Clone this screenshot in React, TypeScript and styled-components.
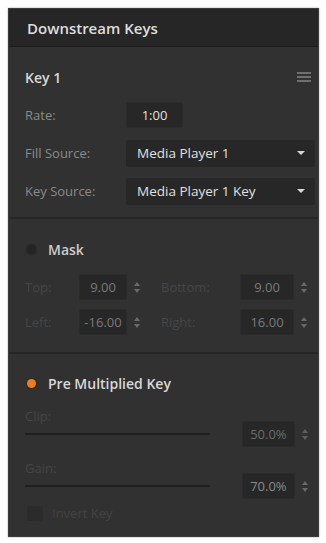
import React from "react";
import styled, { createGlobalStyle } from "styled-components";

const GlobalStyle = createGlobalStyle`
  html, body {
    margin: 0;
    padding: 0;
    background: #ffffff;
  }
  body {
    font-family: "Open Sans", "Liberation Sans", sans-serif;
  }
`;

const Page = styled.div`
  padding: 8px 6px 6px 8px;
`;

const Panel = styled.div`
  width: 311px;
  height: 529px;
  background: #313131;
  border: 1px solid #3c3c3c;
  box-shadow: 0 0 2px rgba(0, 0, 0, 0.35);
  display: flex;
  flex-direction: column;
  box-sizing: border-box;
  overflow: hidden;
`;

const Header = styled.div`
  height: 37px;
  background: #262626;
  border-bottom: 1px solid #1b1b1b;
  display: flex;
  align-items: center;
  padding-left: 18px;
  font-size: 15px;
  font-weight: 600;
  color: #dedede;
  flex-shrink: 0;
`;

const Section = styled.div<{ $top: number; $bottom: number; $gap?: number }>`
  display: flex;
  flex-direction: column;
  padding: ${(p) => p.$top}px 3px ${(p) => p.$bottom}px 16px;
  gap: ${(p) => p.$gap ?? 0}px;
  border-bottom: 2px solid #262626;
  &:last-child {
    border-bottom: none;
    flex: 1;
  }
`;

const TitleRow = styled.div<{ $mb: number }>`
  height: 20px;
  display: flex;
  align-items: center;
  justify-content: space-between;
  margin-bottom: ${(p) => p.$mb}px;
`;

const Title = styled.span<{ $dim?: boolean }>`
  font-size: 14px;
  font-weight: 600;
  color: ${(p) => (p.$dim ? "#cdcdcd" : "#d8d8d8")};
`;

const Menu = styled.div`
  width: 14px;
  display: flex;
  flex-direction: column;
  gap: 2px;
  margin-right: 4px;
  & > span {
    height: 2px;
    background: #6f6f6f;
  }
`;

const Row = styled.div`
  height: 26px;
  display: flex;
  align-items: center;
`;

const Label = styled.span<{ $w: number; $faint?: boolean }>`
  width: ${(p) => p.$w}px;
  flex-shrink: 0;
  font-size: 13px;
  color: ${(p) => (p.$faint ? "#464646" : "#8a8a8a")};
`;

const Field = styled.div<{ $w: number; $color?: string }>`
  width: ${(p) => p.$w}px;
  height: 26px;
  box-sizing: border-box;
  background: #272727;
  border: 1px solid #2b2b2b;
  border-radius: 2px;
  display: flex;
  align-items: center;
  justify-content: center;
  font-size: 13px;
  color: ${(p) => p.$color ?? "#e0e0e0"};
`;

const Select = styled.div`
  flex: 1;
  height: 27px;
  background: #272727;
  border-radius: 2px;
  display: flex;
  align-items: center;
  justify-content: space-between;
  padding: 0 10px 0 11px;
  font-size: 13.5px;
  color: #e0e0e0;
`;

const Caret = styled.span`
  width: 0;
  height: 0;
  border-left: 4px solid transparent;
  border-right: 4px solid transparent;
  border-top: 4px solid #d8d8d8;
`;

const Stepper = styled.div<{ $color: string }>`
  width: 20px;
  display: flex;
  flex-direction: column;
  align-items: center;
  gap: 3px;
  &::before,
  &::after {
    content: "";
    width: 0;
    height: 0;
    border-left: 3px solid transparent;
    border-right: 3px solid transparent;
  }
  &::before {
    border-bottom: 4px solid ${(p) => p.$color};
  }
  &::after {
    border-top: 4px solid ${(p) => p.$color};
  }
`;

const Dot = styled.span<{ $on?: boolean }>`
  width: 9px;
  height: 9px;
  border-radius: 50%;
  margin: 0 12px 0 2px;
  background: ${(p) => (p.$on ? "#e47d2c" : "#242424")};
  box-shadow: 0 0 0 1.5px ${(p) => (p.$on ? "#3a2a1e" : "#2a2a2a")};
`;

const Left = styled.div`
  display: flex;
  align-items: center;
`;

const SliderBlock = styled.div<{ $mt: number }>`
  display: flex;
  flex-direction: column;
  margin-top: ${(p) => p.$mt}px;
`;

const SliderLabel = styled.span`
  font-size: 13px;
  line-height: 14px;
  color: #464646;
`;

const SliderRow = styled.div`
  display: flex;
  align-items: center;
  height: 26px;
  margin-top: -2px;
`;

const Track = styled.div`
  width: 186px;
  height: 2px;
  background: #1f1f1f;
  margin-right: 32px;
`;

const Check = styled.span`
  width: 16px;
  height: 15px;
  margin: 0 9px 0 2px;
  background: #2b2b2b;
  border-radius: 2px;
`;

const InvertLabel = styled.span`
  font-size: 13px;
  color: #434343;
`;

const Spacer = styled.div<{ $w: number }>`
  width: ${(p) => p.$w}px;
  flex-shrink: 0;
`;

const App: React.FC = () => {
  return (
    <>
      <GlobalStyle />
      <Page>
        <Panel>
          <Header>Downstream Keys</Header>

          <Section $top={20} $bottom={13} $gap={12}>
            <TitleRow $mb={3}>
              <Title>Key 1</Title>
              <Menu>
                <span />
                <span />
                <span />
              </Menu>
            </TitleRow>
            <Row>
              <Label $w={101}>Rate:</Label>
              <Field $w={57}>1:00</Field>
            </Row>
            <Row>
              <Label $w={101}>Fill Source:</Label>
              <Select>
                Media Player 1
                <Caret />
              </Select>
            </Row>
            <Row>
              <Label $w={101}>Key Source:</Label>
              <Select>
                Media Player 1 Key
                <Caret />
              </Select>
            </Row>
          </Section>

          <Section $top={20} $bottom={17} $gap={9}>
            <TitleRow $mb={6}>
              <Left>
                <Dot />
                <Title $dim>Mask</Title>
              </Left>
            </TitleRow>
            <Row>
              <Label $w={54} $faint>
                Top:
              </Label>
              <Field $w={48} $color="#7a7a7a">
                9.00
              </Field>
              <Stepper $color="#6a6a6a" />
              <Spacer $w={14} />
              <Label $w={79} $faint>
                Bottom:
              </Label>
              <Field $w={54} $color="#7a7a7a">
                9.00
              </Field>
              <Stepper $color="#6a6a6a" />
            </Row>
            <Row>
              <Label $w={54} $faint>
                Left:
              </Label>
              <Field $w={48} $color="#7a7a7a">
                -16.00
              </Field>
              <Stepper $color="#6a6a6a" />
              <Spacer $w={14} />
              <Label $w={79} $faint>
                Right:
              </Label>
              <Field $w={54} $color="#7a7a7a">
                16.00
              </Field>
              <Stepper $color="#6a6a6a" />
            </Row>
          </Section>

          <Section $top={19} $bottom={0}>
            <TitleRow $mb={0}>
              <Left>
                <Dot $on />
                <Title>Pre Multiplied Key</Title>
              </Left>
            </TitleRow>
            <SliderBlock $mt={16}>
              <SliderLabel>Clip:</SliderLabel>
              <SliderRow>
                <Track />
                <Field $w={54} $color="#6c6c6c">
                  50.0%
                </Field>
                <Stepper $color="#5e5e5e" />
              </SliderRow>
            </SliderBlock>
            <SliderBlock $mt={14}>
              <SliderLabel>Gain:</SliderLabel>
              <SliderRow>
                <Track />
                <Field $w={54} $color="#8a8a8a">
                  70.0%
                </Field>
                <Stepper $color="#6a6a6a" />
              </SliderRow>
            </SliderBlock>
            <Row style={{ marginTop: 3, height: 22 }}>
              <Check />
              <InvertLabel>Invert Key</InvertLabel>
            </Row>
          </Section>
        </Panel>
      </Page>
    </>
  );
};

export default App;
